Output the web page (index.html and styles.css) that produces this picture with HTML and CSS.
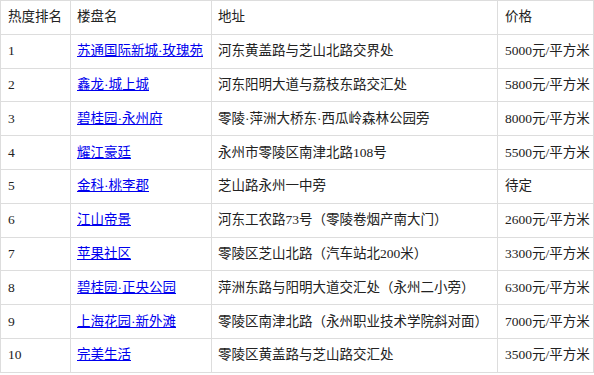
FILE: index.html
```html
<!DOCTYPE html>
<html lang="zh">
<head>
<meta charset="utf-8">
<link rel="stylesheet" href="styles.css">
</head>
<body>
<table class="tbl">
  <colgroup>
    <col class="c1"><col class="c2"><col class="c3"><col class="c4">
  </colgroup>
  <tr><td>热度排名</td><td>楼盘名</td><td>地址</td><td>价格</td></tr>
  <tr><td>1</td><td><a href="#">苏通国际新城·玫瑰苑</a></td><td>河东黄盖路与芝山北路交界处</td><td>5000元/平方米</td></tr>
  <tr><td>2</td><td><a href="#">鑫龙·城上城</a></td><td>河东阳明大道与荔枝东路交汇处</td><td>5800元/平方米</td></tr>
  <tr><td>3</td><td><a href="#">碧桂园·永州府</a></td><td>零陵·萍洲大桥东·西瓜岭森林公园旁</td><td>8000元/平方米</td></tr>
  <tr><td>4</td><td><a href="#">耀江豪廷</a></td><td>永州市零陵区南津北路108号</td><td>5500元/平方米</td></tr>
  <tr><td>5</td><td><a href="#">金科·桃李郡</a></td><td>芝山路永州一中旁</td><td>待定</td></tr>
  <tr><td>6</td><td><a href="#">江山帝景</a></td><td>河东工农路73号（零陵卷烟产南大门）</td><td>2600元/平方米</td></tr>
  <tr><td>7</td><td><a href="#">苹果社区</a></td><td>零陵区芝山北路（汽车站北200米）</td><td>3300元/平方米</td></tr>
  <tr><td>8</td><td><a href="#">碧桂园·正央公园</a></td><td>萍洲东路与阳明大道交汇处（永州二小旁）</td><td>6300元/平方米</td></tr>
  <tr><td>9</td><td><a href="#">上海花园·新外滩</a></td><td>零陵区南津北路（永州职业技术学院斜对面）</td><td>7000元/平方米</td></tr>
  <tr><td>10</td><td><a href="#">完美生活</a></td><td>零陵区黄盖路与芝山路交汇处</td><td>3500元/平方米</td></tr>
</table>
</body>
</html>
```
FILE: styles.css
```css
body {
  margin: 0;
  background: #fff;
  font-family: "Liberation Serif", "Noto Sans CJK SC", serif;
  font-size: 13.5px;
  color: #222;
}
.tbl {
  border-collapse: collapse;
  table-layout: fixed;
  width: 593px;
}
.c1 { width: 70px; }
.c2 { width: 141px; }
.c3 { width: 286px; }
.c4 { width: 96px; }
.tbl td {
  border: 1px solid #ddd;
  height: 32.8px;
  padding: 0 0 0 6px;
  line-height: 18px;
  vertical-align: middle;
  white-space: nowrap;
  overflow: hidden;
}
.tbl td:first-child { padding-left: 7px; }
.tbl td:last-child { padding-left: 7px; }
.tbl a { color: #00e; text-decoration: underline; }
```
